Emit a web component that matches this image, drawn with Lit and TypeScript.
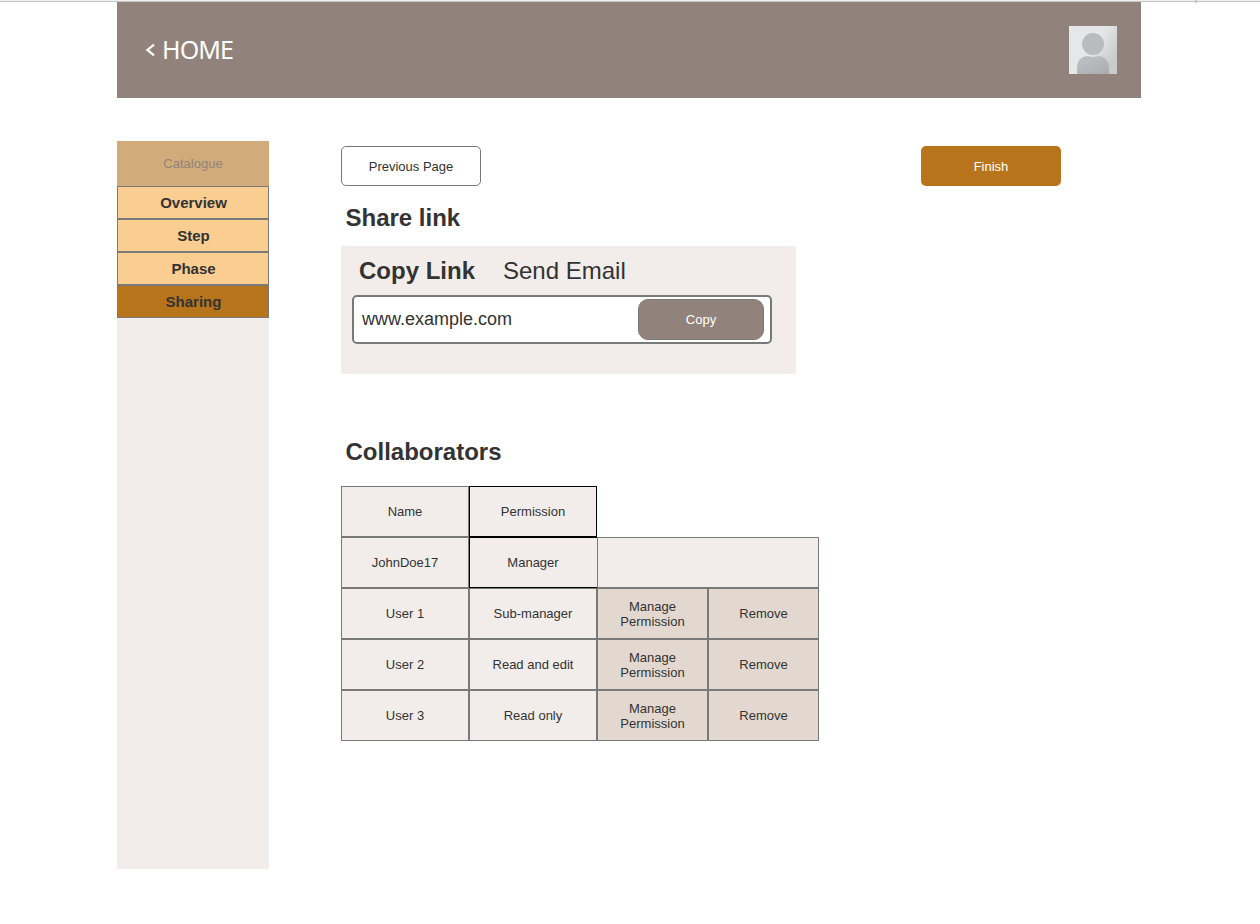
import { LitElement, html, css } from "lit";
import { customElement } from "lit/decorators.js";
import { classMap } from "lit/directives/class-map.js";

@customElement("app-root")
export class AppRoot extends LitElement {
  static styles = css`
    :host {
      display: block;
      width: 1260px;
      height: 924px;
      overflow: hidden;
      background: #fff;
      color: #333;
      font: 13px/15px "Liberation Sans", Arial, sans-serif;
    }
    * { box-sizing: border-box; }
    button { font: inherit; color: inherit; margin: 0; padding: 0; }
    .edge {
      height: 2px;
      background: #efefef;
      border-bottom: 1px solid #c8c8c8;
      position: relative;
    }
    .tick {
      position: absolute;
      left: 1195px;
      top: 0;
      width: 2px;
      height: 3px;
      background: #c8c8c8;
    }
    .page { width: 1024px; margin-left: 117px; }
    .header {
      height: 96px;
      background: #91837b;
      display: flex;
      align-items: center;
      justify-content: space-between;
      padding: 0 24px 0 28px;
      color: #fff;
    }
    .home {
      display: flex;
      align-items: center;
      gap: 6px;
      font: 25px/36px "Noto Sans", sans-serif;
      letter-spacing: -0.9px;
    }
    .home span { padding-bottom: 2px; }
    .home svg, .avatar { display: block; }
    .body { display: flex; gap: 72px; padding-top: 43px; }
    .side { width: 152px; height: 728px; background: #f2edea; }
    .catalogue {
      height: 45px;
      background: #d2ab7a;
      color: #91837b;
      display: flex;
      align-items: center;
      justify-content: center;
    }
    .nav {
      display: flex;
      align-items: center;
      justify-content: center;
      height: 33px;
      width: 100%;
      border: 1px solid #797979;
      background: #facd91;
      font-size: 15px;
      font-weight: 700;
      padding-left: 1px;
    }
    .nav.active { background: #b8741a; }
    .main { width: 720px; padding-top: 5px; }
    .actions { display: flex; justify-content: space-between; }
    .btn { width: 140px; height: 40px; border-radius: 5px; border: 1px solid #797979; background: #fff; }
    .btn.primary { background: #b8741a; border: 0; color: #fff; }
    h2 { font-size: 24px; line-height: 28px; margin: 18px 0 0 4.5px; font-weight: 700; }
    .share { width: 455px; height: 128px; background: #f2edea; margin-top: 14px; padding: 11px 24px 0 11px; }
    .tabs { display: flex; gap: 28px; padding-left: 7px; font-size: 24px; line-height: 28px; }
    .tab.on { font-weight: 700; }
    .field {
      margin-top: 10px;
      height: 49px;
      border: 2px solid #797979;
      border-radius: 5px;
      background: #fff;
      display: flex;
      align-items: center;
      justify-content: space-between;
      padding: 0 6px 0 8px;
      font-size: 18px;
      line-height: 20px;
    }
    .field span { padding-bottom: 2px; }
    .copy {
      width: 126px;
      height: 41px;
      border: 1px solid #797979;
      border-radius: 10px;
      background: #91837b;
      color: #fff;
      font-size: 13px;
      line-height: 15px;
    }
    .field button.copy { color: #fff; }
    h2.second { margin-top: 64px; }
    .grid { margin-top: 20px; display: grid; grid-template-columns: 128px 128px 111px 111px; grid-auto-rows: 51px; }
    .cell {
      display: flex;
      align-items: center;
      justify-content: center;
      text-align: center;
      border: 1px solid #797979;
      background: #f2edea;
    }
    .strong { border-color: #000; }
    .open { border-right: 0; padding-right: 1px; }
    .wide { grid-column: span 2; }
    .blank { grid-column: span 2; }
    .action { background: #e2d8cf; padding: 0 20px; }
  `;

  private nav = ["Overview", "Step", "Phase", "Sharing"];
  private users = [
    ["User 1", "Sub-manager"],
    ["User 2", "Read and edit"],
    ["User 3", "Read only"],
  ];

  render() {
    return html`
      <div class="edge"><div class="tick"></div></div>
      <div class="page">
        <header class="header">
          <div class="home">
            <svg width="11" height="14" viewBox="0 0 11 14" fill="none" stroke="#fff" stroke-width="2.2">
              <path d="M9 1.6 L2.4 6.9 L9 12.3" />
            </svg>
            <span>HOME</span>
          </div>
          <svg class="avatar" width="48" height="48" viewBox="0 0 48 48">
            <defs>
              <linearGradient id="bg" x1="0" y1="0" x2="1" y2=".6">
                <stop offset=".55" stop-color="#e6e7e8" />
                <stop offset="1" stop-color="#c9cbcd" />
              </linearGradient>
              <linearGradient id="fg" x1="0" y1="0" x2="1" y2="1">
                <stop offset=".3" stop-color="#babcbf" />
                <stop offset="1" stop-color="#a9abae" />
              </linearGradient>
            </defs>
            <rect width="48" height="48" fill="url(#bg)" />
            <circle cx="24" cy="18" r="11" fill="#b9bbbe" />
            <path d="M8 48V42C8 34 13 30 19 30Q24 32 29 30C35 30 40 34 40 42V48Z" fill="url(#fg)" />
          </svg>
        </header>
        <div class="body">
          <nav class="side">
            <div class="catalogue">Catalogue</div>
            ${this.nav.map((n) => html`<button class=${classMap({ nav: true, active: n === "Sharing" })}>${n}</button>`)}
          </nav>
          <main class="main">
            <div class="actions">
              <button class="btn">Previous Page</button>
              <button class="btn primary">Finish</button>
            </div>
            <h2>Share link</h2>
            <section class="share">
              <div class="tabs"><span class="tab on">Copy Link</span><span class="tab">Send Email</span></div>
              <div class="field"><span>www.example.com</span><button class="copy">Copy</button></div>
            </section>
            <h2 class="second">Collaborators</h2>
            <div class="grid">
              <div class="cell">Name</div>
              <div class="cell strong">Permission</div>
              <div class="blank"></div>
              <div class="cell">JohnDoe17</div>
              <div class="cell strong open">Manager</div>
              <div class="cell wide"></div>
              ${this.users.map(
                ([name, role]) => html`
                  <div class="cell">${name}</div>
                  <div class="cell">${role}</div>
                  <button class="cell action">Manage Permission</button>
                  <button class="cell action">Remove</button>
                `
              )}
            </div>
          </main>
        </div>
      </div>
    `;
  }
}
